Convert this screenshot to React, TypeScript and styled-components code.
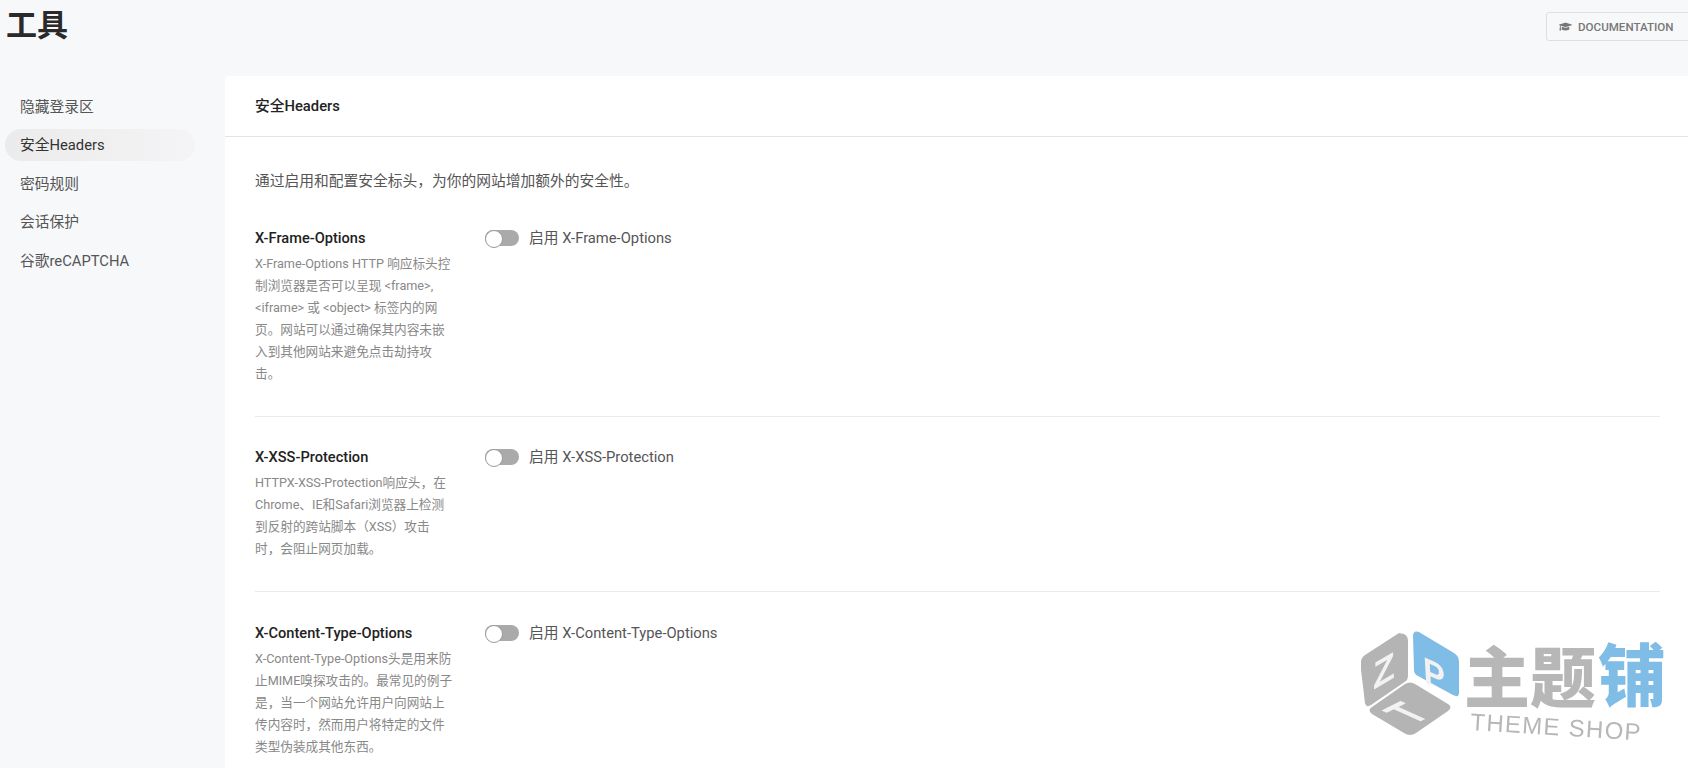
import styled, { createGlobalStyle } from "styled-components";
import { FaGraduationCap } from "react-icons/fa";

const GlobalStyle = createGlobalStyle`
  html, body {
    margin: 0;
    padding: 0;
    height: 768px;
    overflow: hidden;
    background: #f7f8fa;
    font-family: Roboto, "Noto Sans CJK SC", sans-serif;
    color: #444;
  }
  * {
    box-sizing: border-box;
  }
`;

const Page = styled.div`
  position: relative;
  width: 1688px;
  height: 768px;
  overflow: hidden;
`;
const TopBar = styled.header`
  display: flex;
  justify-content: space-between;
  align-items: flex-start;
  height: 76px;
  padding: 12px 0 0 6px;
`;
const PageTitle = styled.h1`
  margin: 0;
  font-size: 31px;
  font-weight: 700;
  line-height: 28px;
  color: #2a2a2a;
`;
const DocButton = styled.a`
  display: flex;
  flex: none;
  align-items: center;
  gap: 6px;
  width: 152px;
  height: 29px;
  margin-right: -10px;
  padding-left: 12px;
  border: 1px solid #dedfe3;
  border-radius: 3px;
  color: #777;
  font-size: 11.6px;
  font-weight: 500;
  svg {
    width: 13px;
    height: 13px;
  }
`;
const Layout = styled.div`
  display: grid;
  grid-template-columns: 225px 1fr;
  height: 692px;
`;
const SideNav = styled.nav`
  display: flex;
  flex-direction: column;
  gap: 6.4px;
  padding: 15px 30px 0 5px;
`;
const NavItem = styled.div<{ $active?: boolean }>`
  display: flex;
  align-items: center;
  height: 32px;
  padding: 0 0 3px 15px;
  border-radius: 16px;
  font-size: 14.75px;
  color: ${(p) => (p.$active ? "#333" : "#555")};
  background: ${(p) => (p.$active ? "linear-gradient(90deg, #ebebeb, #f4f4f6)" : "none")};
`;
const Card = styled.main`
  background: #fff;
  border-top-left-radius: 4px;
`;
const CardHeader = styled.div`
  display: flex;
  align-items: center;
  height: 61px;
  padding: 0 0 3px 30px;
  border-bottom: 1px solid #e4e4e7;
  font-size: 14.75px;
  font-weight: 500;
  color: #222;
`;
const CardBody = styled.div`
  padding: 33px 28px 0 30px;
`;
const Intro = styled.p`
  margin: 0 0 6px;
  font-size: 14.75px;
  line-height: 22px;
  color: #555;
`;
const OptionRow = styled.section`
  display: grid;
  grid-template-columns: 230px 1fr;
  padding: 30px 0 31px;
  & + & {
    border-top: 1px solid #ebebed;
  }
  &:last-child {
    padding-top: 31px;
  }
`;
const OptionInfo = styled.div`
  width: 199px;
`;
const OptionTitle = styled.div`
  margin-bottom: 5px;
  font-size: 14.6px;
  font-weight: 500;
  line-height: 20px;
  color: #222;
`;
const OptionDesc = styled.div`
  font-size: 12.65px;
  line-height: 22px;
  color: #888;
`;
const ToggleLine = styled.label`
  display: flex;
  align-items: center;
  gap: 10px;
  height: 20px;
  font-size: 14.75px;
  color: #555;
`;
const ToggleText = styled.span`
  margin-top: -3px;
`;
const Toggle = styled.span`
  position: relative;
  display: block;
  width: 34px;
  height: 16px;
  border-radius: 8px;
  background: #aaa;
  &::before {
    content: "";
    position: absolute;
    left: 0;
    top: 0;
    width: 16px;
    height: 16px;
    border: 1px solid #999;
    border-radius: 50%;
    background: #fff;
  }
`;
const Watermark = styled.svg`
  position: absolute;
  right: 0;
  bottom: 0;
  width: 348px;
  height: 158px;
  filter: blur(0.5px);
  pointer-events: none;
`;
const MarkGlyph = styled.text`
  font-family: "Noto Sans CJK SC", sans-serif;
  font-weight: 900;
`;
const MarkCaption = styled.text`
  font-family: "Liberation Sans", sans-serif;
  font-size: 24px;
  letter-spacing: 1.3px;
  fill: #b7b7b7;
`;
const CubeLetter = styled.text`
  font-family: "Liberation Sans", sans-serif;
  font-size: 42px;
  font-weight: 700;
  fill: #f2f2f2;
`;

const navItems = ["隐藏登录区", "安全Headers", "密码规则", "会话保护", "谷歌reCAPTCHA"];

const options = [
  {
    name: "X-Frame-Options",
    desc: "X-Frame-Options HTTP 响应标头控制浏览器是否可以呈现 <frame>, <iframe> 或 <object> 标签内的网页。网站可以通过确保其内容未嵌入到其他网站来避免点击劫持攻击。",
  },
  {
    name: "X-XSS-Protection",
    desc: "HTTPX-XSS-Protection响应头，在Chrome、IE和Safari浏览器上检测到反射的跨站脚本（XSS）攻击时，会阻止网页加载。",
  },
  {
    name: "X-Content-Type-Options",
    desc: "X-Content-Type-Options头是用来防止MIME嗅探攻击的。最常见的例子是，当一个网站允许用户向网站上传内容时，然而用户将特定的文件类型伪装成其他东西。",
  },
];

const Logo = () => (
  <Watermark viewBox="0 0 348 158">
    <path
      d="M59 23 L64 24 Q68 26 68 31 L68 66 Q68 69 66 71 L31 95 Q26 98 25 93 L21 60 L21 52 Q21 48 25 45 Z"
      fill="#b4b4b4"
    />
    <path
      d="M73 26 Q73 20 79 22 L114 43 Q119 46 119 52 L119 83 Q119 88 113 85 L78 66 Q74 64 74 60 Z"
      fill="#7fbde7"
    />
    <path
      d="M65 74 Q70 71 75 74 L108 94 Q113 97 108 101 L76 123 Q70 127 64 123 L32 104 Q27 100 32 97 Z"
      fill="#b4b4b4"
    />
    <CubeLetter transform="matrix(0.85 -0.5 0 0.9 33 80)">Z</CubeLetter>
    <CubeLetter transform="matrix(0.78 0.35 0.05 0.88 84 72)">P</CubeLetter>
    <CubeLetter transform="matrix(0.77 -0.38 1.1 0.5 73 115)">T</CubeLetter>
    <MarkGlyph x="124" y="92" fontSize="66" fill="#b7b7b7">主题</MarkGlyph>
    <MarkGlyph x="258" y="91" fontSize="68" fill="#7fbde7">铺</MarkGlyph>
    <MarkCaption x="130" y="120" transform="rotate(3.5 130 120)">THEME SHOP</MarkCaption>
  </Watermark>
);

export default function App() {
  return (
    <Page>
      <GlobalStyle />
      <TopBar>
        <PageTitle>工具</PageTitle>
        <DocButton>
          <FaGraduationCap />
          DOCUMENTATION
        </DocButton>
      </TopBar>
      <Layout>
        <SideNav>
          {navItems.map((item) => (
            <NavItem key={item} $active={item === "安全Headers"}>
              {item}
            </NavItem>
          ))}
        </SideNav>
        <Card>
          <CardHeader>安全Headers</CardHeader>
          <CardBody>
            <Intro>通过启用和配置安全标头，为你的网站增加额外的安全性。</Intro>
            {options.map((option) => (
              <OptionRow key={option.name}>
                <OptionInfo>
                  <OptionTitle>{option.name}</OptionTitle>
                  <OptionDesc>{option.desc}</OptionDesc>
                </OptionInfo>
                <ToggleLine>
                  <Toggle />
                  <ToggleText>启用 {option.name}</ToggleText>
                </ToggleLine>
              </OptionRow>
            ))}
          </CardBody>
        </Card>
      </Layout>
      <Logo />
    </Page>
  );
}
